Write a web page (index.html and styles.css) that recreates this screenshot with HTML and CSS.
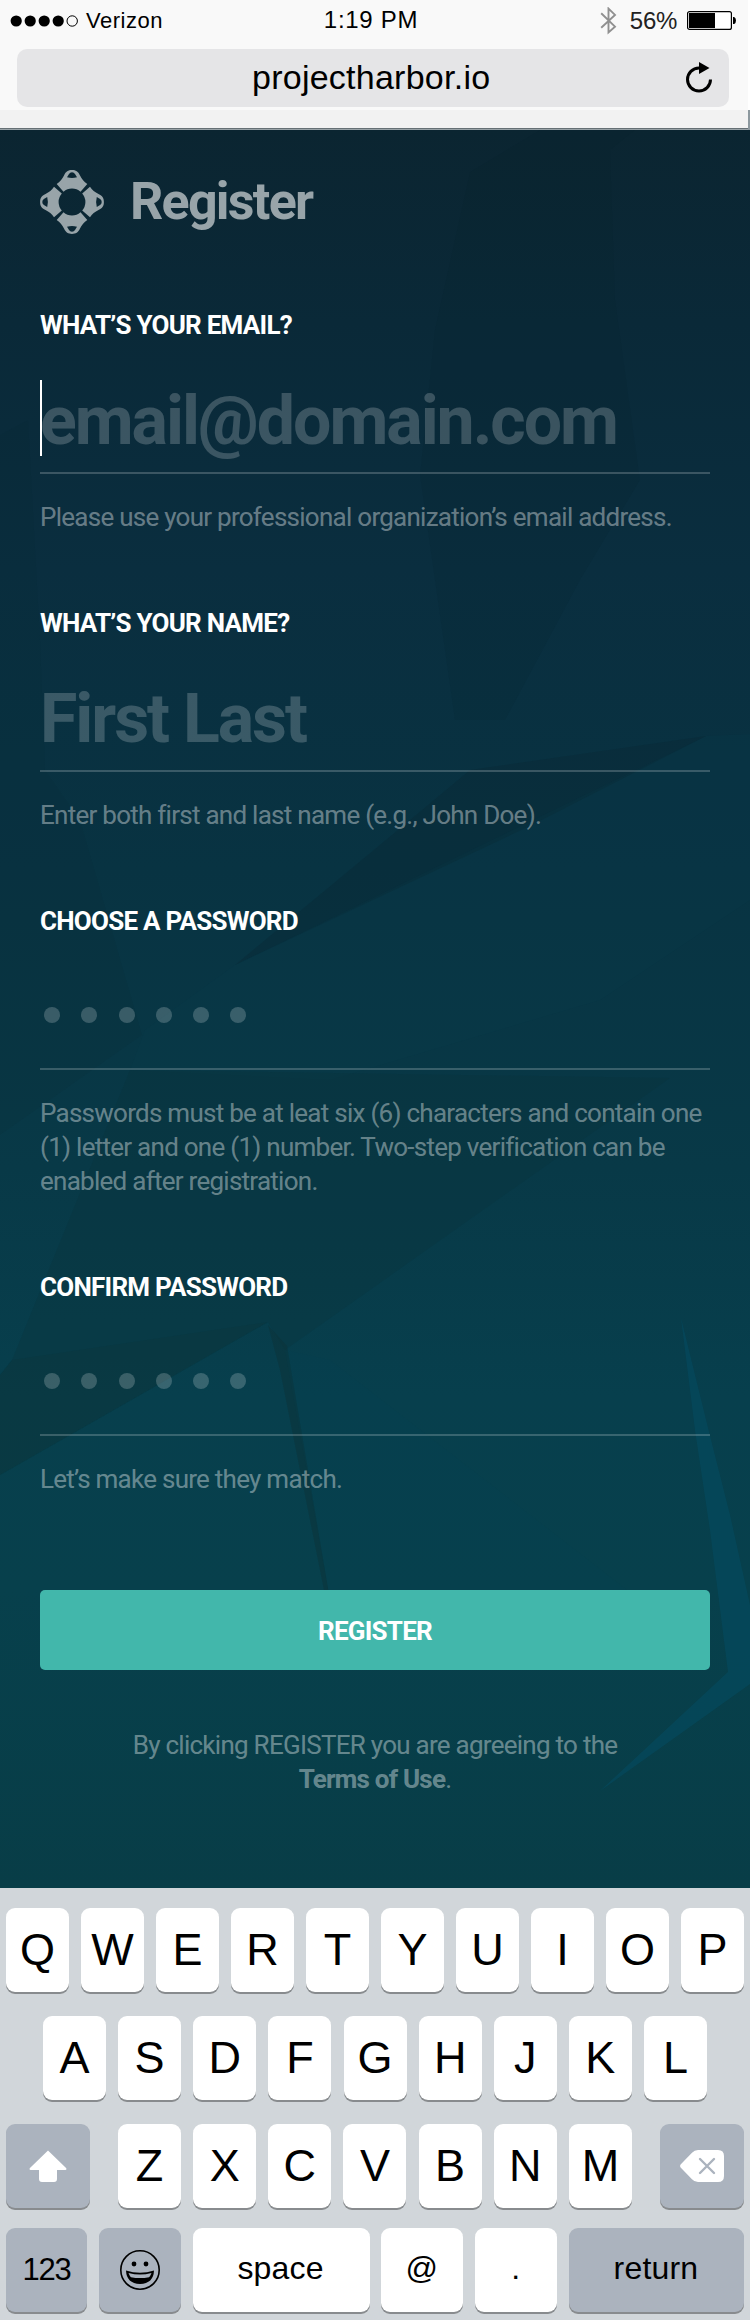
FILE: index.html
```html
<!DOCTYPE html>
<html lang="en">
<head>
<meta charset="utf-8">
<title>Register</title>
<link rel="stylesheet" href="styles.css">
</head>
<body>
<div class="phone">
  <header class="browser">
    <div class="status">
      <div class="carrier">
        <svg width="66" height="14" viewBox="0 0 66 14"><g><circle cx="5.7" cy="7" r="5.6"/><circle cx="19.7" cy="7" r="5.6"/><circle cx="33.7" cy="7" r="5.6"/><circle cx="47.7" cy="7" r="5.6"/></g><circle cx="61.7" cy="7" r="5.2" fill="none" stroke="#000" stroke-width="1"/></svg>
        <span>Verizon</span>
      </div>
      <div class="clock">1:19 PM</div>
      <div class="power">
        <svg width="17" height="28" viewBox="0 0 17 28"><path d="M1.2 6.2 15 19.6 8.500 25.400V1.600L15 7.900 1.200 20.800" fill="none" stroke="#909090" stroke-width="1.900"/></svg>
        <span>56%</span>
        <svg class="battery" width="50" height="20" viewBox="0 0 50 20"><rect x=".6" y=".6" width="43.800" height="17.800" rx="2" fill="#fff" stroke="#000" stroke-width="1.200"/><rect x="2" y="2" width="26" height="15"/><path d="M46 6h1.200q1.800 1 1.800 3.500t-1.800 3.500H46z"/></svg>
      </div>
    </div>
    <div class="address">
      <span>projectharbor.io</span>
      <svg class="reload" width="28" height="32" viewBox="0 0 28 32"><path d="M25.500 18.500a11.500 11.500 0 1 1-11.500-11.500h2" fill="none" stroke="#000" stroke-width="3"/><path d="M14 1 24.500 7 14 13z"/></svg>
    </div>
    <div class="toolbar-edge"></div>
  </header>

  <main class="screen">
    <svg class="facets" viewBox="0 0 750 1758" preserveAspectRatio="none">
      <g transform="translate(0 -130)">
        <path d="M540 130 470 172 435 330 420 475 455 720 505 720 580 580 640 480 615 300 610 150 635 130z" fill="#0a1f29" opacity=".12"/>
        <path d="M0 435 28 420 40 640 45 770 80 820 142 1035 0 1135z" fill="#0a2630" opacity=".12"/>
        <path d="M706 736 470 770 410 820 235 965 530 826z" fill="#0b2834" opacity=".4"/>
        <path d="M706 736 750 734 750 900 600 1000 330 1080 130 1070 145 1030 235 965z" fill="#064152" opacity=".12"/>
        <path d="M130 1070 670 1078 285 1350 268 1322 0 1475V1375L12 1360z" fill="#0b3438" opacity=".28"/>
        <path d="M268 1322 0 1475V1375L12 1360z" fill="#0b3438" opacity=".25"/>
        <path d="M268 1325 287 1346 330 1600H326L280 1370z" fill="#0b3238" opacity=".5"/>
        <path d="M285 1350 330 1360 640 1600H330z" fill="#04475a" opacity=".1"/>
        <path d="M681 1318 709 1432 730 1515 750 1605V1684L600 1791 728 1672 710 1530 695 1430z" fill="#044c63" opacity=".52"/>
      </g>
    </svg>

    <form class="form">
      <div class="brand">
        <svg width="64" height="64" viewBox="-32 -32 64 64" fill="#98a4a9">
          <defs><path id="quarter" fill-rule="evenodd" d="M-15.300-18C-12-20-9.800-23-8-26.500-6-30.500-4-31.900 0-31.900S6-30.500 8-26.500C9.800-23 12-20 15.300-18L8.500-10.200A12.900 12.900 0 0 0-8.500-10.200zM-5-24.800Q0-23.400 5-24.800L3-28.100Q2-29.700 0-29.700T-3-28.100z"/></defs>
          <use href="#quarter"/><use href="#quarter" transform="rotate(90)"/><use href="#quarter" transform="rotate(180)"/><use href="#quarter" transform="rotate(270)"/>
        </svg>
        <h1>Register</h1>
      </div>

      <section class="field">
        <div class="label">WHAT’S YOUR EMAIL?</div>
        <div class="value focused">email@domain.com</div>
        <p class="help">Please use your professional organization’s email address.</p>
      </section>
      <section class="field">
        <div class="label">WHAT’S YOUR NAME?</div>
        <div class="value">First Last</div>
        <p class="help">Enter both first and last name (e.g., John Doe).</p>
      </section>
      <section class="field">
        <div class="label">CHOOSE A PASSWORD</div>
        <div class="value dots"><i></i><i></i><i></i><i></i><i></i><i></i></div>
        <p class="help">Passwords must be at leat six (6) characters and contain one<br>(1) letter and one (1) number. Two-step verification can be<br>enabled after registration.</p>
      </section>
      <section class="field">
        <div class="label">CONFIRM PASSWORD</div>
        <div class="value dots"><i></i><i></i><i></i><i></i><i></i><i></i></div>
        <p class="help">Let’s make sure they match.</p>
      </section>

      <div class="submit">REGISTER</div>
      <p class="terms">By clicking REGISTER you are agreeing to the<br><b>Terms of Use</b>.</p>
    </form>
  </main>

  <div class="keyboard">
    <div class="row top"><span class="key">Q</span><span class="key">W</span><span class="key">E</span><span class="key">R</span><span class="key">T</span><span class="key">Y</span><span class="key">U</span><span class="key">I</span><span class="key">O</span><span class="key">P</span></div>
    <div class="row home"><span class="key">A</span><span class="key">S</span><span class="key">D</span><span class="key">F</span><span class="key">G</span><span class="key">H</span><span class="key">J</span><span class="key">K</span><span class="key">L</span></div>
    <div class="row third">
      <span class="key dark wide"><svg width="38" height="32" viewBox="0 0 38 32"><path d="M19 .5 37.300 18.200Q38 20 36.500 20H28v9q0 3-3 3H13q-3 0-3-3v-9H1.500Q0 20 .7 18.200z" fill="#fff"/></svg></span>
      <div class="letters"><span class="key">Z</span><span class="key">X</span><span class="key">C</span><span class="key">V</span><span class="key">B</span><span class="key">N</span><span class="key">M</span></div>
      <span class="key dark wide"><svg width="44" height="32" viewBox="0 0 44 32"><path d="M.6 14.600 12 2.800Q14.500 0 18 0H38q6 0 6 6v20q0 6-6 6H18q-3.500 0-6-2.800L.6 17.400Q-.4 16 .6 14.600z" fill="#fff"/><path d="M20 9 34 23M34 9 20 23" stroke="#abb3be" stroke-width="2.400" stroke-linecap="round"/></svg></span>
    </div>
    <div class="row bottom">
      <span class="key dark num">123</span>
      <span class="key dark"><svg width="40" height="40" viewBox="0 0 40 40"><circle cx="20" cy="20" r="19.200" fill="none" stroke="#000" stroke-width="1.600"/><circle cx="14" cy="14" r="2.400"/><circle cx="26" cy="14" r="2.400"/><path d="M6 20.500Q20 25 34 20.500 33.500 33.500 20 34 6.500 33.500 6 20.500zM8.500 23Q9.600 26 11 27.200 20 29 29 27.200 30.400 26 31.500 23 20 26.200 8.500 23z" fill-rule="evenodd"/></svg></span>
      <span class="key word">space</span>
      <span class="key word">@</span>
      <span class="key word">.</span>
      <span class="key dark word">return</span>
    </div>
  </div>
</div>
</body>
</html>
```

FILE: styles.css
```css
* { box-sizing: border-box; }
body { margin: 0; }
h1, p { margin: 0; }
svg { display: block; flex: none; }

.phone {
  width: 750px;
  height: 2320px;
  display: flex;
  flex-direction: column;
  overflow: hidden;
  font-family: Roboto, sans-serif;
}

/* Browser chrome */
.browser {
  height: 130px;
  background: linear-gradient(90deg, #f9f9f9 748px, #fff 748px);
  font-family: "Liberation Sans", Arial, sans-serif;
  color: #000;
}
.status {
  height: 49px;
  padding: 0 13px 0 10px;
  display: grid;
  grid-template-columns: 1fr auto 1fr;
  align-items: start;
}
.carrier, .power { display: flex; align-items: center; height: 41px; font-size: 22px; }
.carrier { letter-spacing: .5px; gap: 10px; }
.carrier svg { width: 67px; margin-right: -1px; overflow: visible; }
.clock { font-size: 24px; line-height: 39px; letter-spacing: .7px; margin-right: 5px; }
.power { justify-content: flex-end; font-size: 24px; color: #222; letter-spacing: -.3px; }
.power span { margin: 0 10px 0 13px; }
.address {
  height: 58px;
  margin: 0 21px 0 17px;
  padding: 0 16px 0 235px;
  border-radius: 10px;
  background: #e5e5e7;
  display: flex;
  justify-content: space-between;
  font-size: 34px;
  line-height: 56px;
  letter-spacing: .25px;
}
.reload { margin-top: 12px; }
.toolbar-edge {
  height: 20px;
  margin-top: 3px;
  border-right: 2px solid #8c989e;
  background: linear-gradient(#f2f2f2 18px, #667075 18px, #667075 19px, #98a2a7 19px);
}

/* Registration form */
.screen {
  position: relative;
  height: 1758px;
  background: linear-gradient(#0b2531, #0a2938 11%, #0a2e3f 25%, #083342 42%, #083947 59%, #073f4d 72%, #07404c 83%, #083d47);
}
.facets { position: absolute; inset: 0; width: 100%; height: 100%; }
.form { position: relative; padding: 40px 40px 0; }
.brand { display: flex; gap: 26px; height: 64px; margin-bottom: 74px; }
.brand h1 {
  font-size: 52px;
  line-height: 64px;
  font-weight: 700;
  letter-spacing: -1.75px;
  color: #98a4a9;
}
.field { margin-bottom: 72px; }
.label {
  font-size: 26px;
  line-height: 34px;
  font-weight: 700;
  letter-spacing: -.75px;
  color: #fff;
  margin-bottom: 38px;
}
.value {
  position: relative;
  height: 94px;
  border-bottom: 2px solid rgba(255, 255, 255, .2);
  font-size: 68px;
  line-height: 82px;
  font-weight: 700;
  letter-spacing: -2.03px;
  color: rgba(255, 255, 255, .2);
}
.focused::before {
  content: "";
  position: absolute;
  left: 0;
  top: 0;
  width: 2px;
  height: 76px;
  background: #fff;
}
.dots { display: flex; gap: 21.200px; padding: 31px 0 0 4.200px; }
.dots i { width: 16px; height: 16px; border-radius: 50%; background: rgba(255, 255, 255, .2); }
.help, .terms {
  font-size: 26px;
  line-height: 34px;
  letter-spacing: -.735px;
  color: rgba(255, 255, 255, .4);
}
.help { margin-top: 26px; white-space: nowrap; }
.submit {
  height: 80px;
  margin-top: 94px;
  border-radius: 5px;
  background: #42b7ab;
  color: #fff;
  font-size: 26px;
  line-height: 82px;
  font-weight: 700;
  letter-spacing: -.78px;
  text-align: center;
}
.terms { margin-top: 58px; text-align: center; }
.terms b { font-weight: 700; letter-spacing: -.78px; }

/* Keyboard */
.keyboard {
  height: 432px;
  padding: 20px 6px 0;
  background: #d1d6da;
  font-family: "Liberation Sans", Arial, sans-serif;
}
.row { display: grid; column-gap: 12px; height: 84px; margin-bottom: 24px; }
.top { grid-template-columns: repeat(10, 63px); }
.home { grid-template-columns: repeat(9, 63px); column-gap: 12.125px; justify-content: center; }
.third { grid-template-columns: 84px 1fr 84px; column-gap: 28px; margin-bottom: 20px; }
.letters { display: flex; gap: 12.170px; }
.letters .key { width: 63px; }
.bottom { grid-template-columns: 81px 82px 177px 82px 82px 175px; column-gap: 11.800px; }
.key {
  height: 84px;
  display: flex;
  align-items: center;
  justify-content: center;
  border-radius: 9px;
  background: #fff;
  box-shadow: 0 2px 0 #888b8e;
  font-size: 45px;
  line-height: 84px;
  color: #000;
}
.dark { background: #abb3be; }
.word { font-size: 32px; padding: 0 1px 4px 0; letter-spacing: .2px; }
.num { font-size: 31px; letter-spacing: -1.200px; }
```
